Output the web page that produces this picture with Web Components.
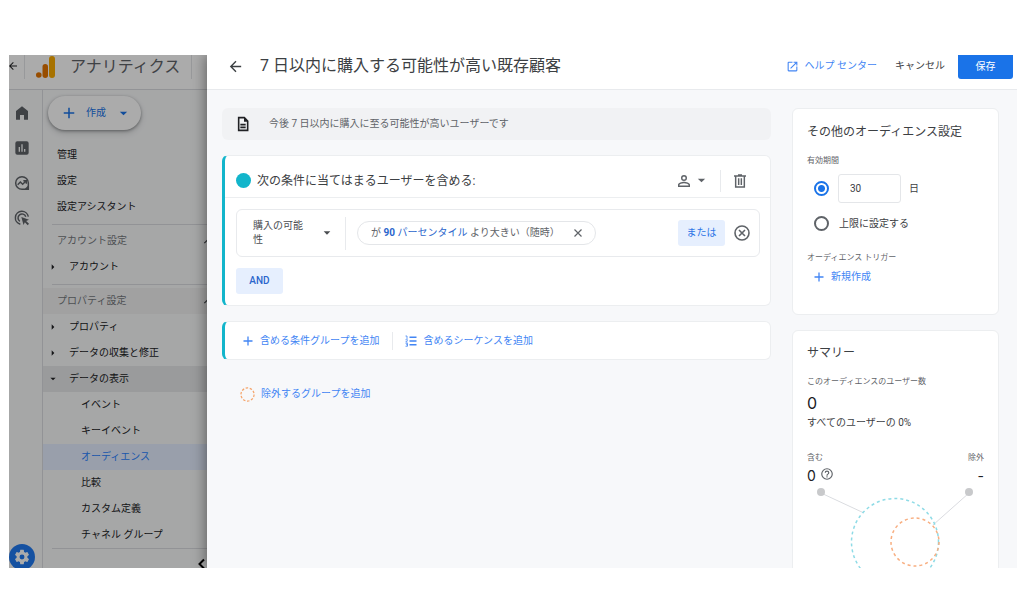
<!DOCTYPE html>
<html lang="ja">
<head>
<meta charset="utf-8">
<meta name="viewport" content="width=device-width, initial-scale=1">
<title>アナリティクス</title>
<style>
  body { margin: 0; background: #fff; font-family: Roboto, "Noto Sans CJK JP", sans-serif; font-size: 10px; line-height: 16px; color: #3c4043; }
</style>
</head>
<body>
<analytics-app></analytics-app>
<script>
const RESET = `
  *, *::before, *::after { box-sizing: border-box; }
  button, input { font: inherit; color: inherit; margin: 0; }
  button { border: 0; padding: 0; background: none; cursor: pointer; white-space: nowrap; }
  a { color: inherit; text-decoration: none; }
  h1, h2, p { margin: 0; font-weight: 400; }
`;

function define(name, markup, setup) {
  const template = document.createElement('template');
  template.innerHTML = markup;
  customElements.define(name, class extends HTMLElement {
    constructor() {
      super();
      this.attachShadow({ mode: 'open' }).append(template.content.cloneNode(true));
    }
    connectedCallback() { if (setup) setup(this, this.shadowRoot); }
  });
}

const ICONS = {
  back: '<path d="M20 11H7.8l5.6-5.6L12 4l-8 8 8 8 1.4-1.4L7.8 13H20z"/>',
  plus: '<path d="M10.700 3h2.600v7.700H21v2.600h-7.700V21h-2.600v-7.700H3v-2.600h7.700z"/>',
  caret: '<path d="M4 8h16l-8 8z"/>',
  home: '<path d="M12 2 3 9v13h6v-7h6v7h6V9z"/>',
  chart: '<path d="M19 2H5a3 3 0 0 0-3 3v14a3 3 0 0 0 3 3h14a3 3 0 0 0 3-3V5a3 3 0 0 0-3-3zM9 17.500H7v-7h2zm4 0h-2v-11h2zm4 0h-2v-4h2z"/>',
  explore: '<g fill="none" stroke="currentColor" stroke-width="2.200"><path d="M21.500 21.500V12a9.500 9.500 0 1 0-9.500 9.500z"/><path d="m5.500 14.500 4-4 3.500 3.500 5-5M14 8.500h4.500V13"/></g><path d="M22 15v7h-7z"/>',
  target: '<g fill="none" stroke="currentColor" stroke-width="2.200"><path d="M9.500 21.300A9.800 9.800 0 1 1 21.500 10"/><path d="M8.800 17A6 6 0 1 1 17.700 10"/></g><path d="m11 10.500 11.500 4-4.300 2 4.300 4.300-1.900 1.900-4.300-4.300-2 4.100z"/>',
  gear: '<path d="M19.140 12.940c.04-.3.06-.61.06-.94 0-.32-.02-.64-.07-.94l2.030-1.580a.49.49 0 0 0 .12-.61l-1.920-3.320a.488.488 0 0 0-.59-.22l-2.390.96c-.5-.38-1.030-.7-1.620-.94l-.36-2.540a.484.484 0 0 0-.48-.41h-3.840c-.24 0-.43.17-.47.41l-.36 2.540c-.59.24-1.130.57-1.620.94l-2.390-.96c-.22-.08-.47 0-.59.22L2.740 8.870c-.12.21-.08.47.12.61l2.030 1.580c-.05.3-.09.63-.09.94s.02.64.07.94l-2.030 1.580a.49.49 0 0 0-.12.61l1.920 3.320c.12.22.37.29.59.22l2.390-.96c.5.38 1.030.7 1.620.94l.36 2.540c.05.24.24.41.48.41h3.840c.24 0 .44-.17.47-.41l.36-2.540c.59-.24 1.130-.56 1.620-.94l2.390.96c.22.08.47 0 .59-.22l1.920-3.320c.12-.22.07-.47-.12-.61zM12 15.300a3.300 3.300 0 1 1 0-6.600 3.300 3.300 0 0 1 0 6.600z"/>',
  up: '<path d="m12 8-7 7 1.400 1.400 5.600-5.600 5.600 5.600L19 15z"/>',
  left: '<path d="M16 3 7 12l9 9" fill="none" stroke="currentColor" stroke-width="4"/>',
  external: '<path d="M19 19H5V5h7V3H5a2 2 0 0 0-2 2v14a2 2 0 0 0 2 2h14a2 2 0 0 0 2-2v-7h-2zM14 3v2h3.590l-9.830 9.830 1.410 1.410L19 6.410V10h2V3z"/>',
  document: '<g fill="none" stroke="currentColor" stroke-width="2.400"><path d="M14 2.500H5.500v19h13.500V7.500z"/><path d="M8 13h8M8 17h8"/></g><path d="M13.500 2v6.500H20z"/>',
  person: '<path d="M12 5.900a2.100 2.100 0 1 1 0 4.200 2.100 2.100 0 0 1 0-4.200m0 9c2.970 0 6.100 1.460 6.100 2.100v1.100H5.900V17c0-.64 3.130-2.100 6.100-2.100M12 4a4 4 0 1 0 0 8 4 4 0 0 0 0-8zm0 9c-2.670 0-8 1.340-8 4v3h16v-3c0-2.660-5.330-4-8-4z"/>',
  trash: '<g fill="none" stroke="currentColor" stroke-width="2.200"><path d="M5.500 5v16h13V5M3 4.500h18M9 3h6M10 8v10M14 8v10"/></g>',
  close: '<path d="m5 5 14 14M19 5 5 19" fill="none" stroke="currentColor" stroke-width="2.400"/>',
  remove: '<g fill="none" stroke="currentColor" stroke-width="2.400"><circle cx="12" cy="12" r="10.500"/><path d="m7.500 7.500 9 9M16.500 7.500l-9 9"/></g>',
  list: '<g fill="none" stroke="currentColor" stroke-width="2.800"><path d="M9 4.500h14M9 12h14M9 19.500h14"/></g><g fill="none" stroke="currentColor" stroke-width="1.600"><path d="M1 2h3v6M1 9.500h4v1l-3.500 3.500H5M1 16.500h4v6H1M2 19.500h3"/></g>',
  ring: '<circle cx="12" cy="12" r="10.500" fill="none" stroke="#f5a46b" stroke-width="2" stroke-dasharray="4 2.600"/>',
  help: '<path d="M11 18h2v-2h-2zm1-16a10 10 0 1 0 0 20 10 10 0 0 0 0-20zm0 18a8 8 0 1 1 0-16 8 8 0 0 1 0 16zm0-14a4 4 0 0 0-4 4h2a2 2 0 1 1 4 0c0 2-3 1.750-3 5h2c0-2.250 3-2.500 3-5a4 4 0 0 0-4-4z"/>'
};

define('ui-icon', `
  <style>
    :host { display: inline-flex; flex: none; width: var(--size, 14px); height: var(--size, 14px); }
    svg { width: 100%; height: 100%; fill: currentColor; }
  </style>
  <svg viewBox="0 0 24 24" aria-hidden="true"></svg>`,
  (host, root) => { root.querySelector('svg').innerHTML = ICONS[host.getAttribute('name')] || ''; });

define('product-bar', `
  <style>${RESET}
    :host { display: flex; align-items: flex-start; box-sizing: border-box; flex: none; height: 35px; background: #fff; border-bottom: 1px solid #dadce0; color: #202124; }
    .back { --size: 12px; width: 17px; height: 22px; display: flex; align-items: center; margin-left: -2px; }
    .brand { display: flex; align-items: center; gap: 14px; height: 24px; border: solid #e3e5e8; border-width: 0 1px; padding: 0 11px; color: #5f6368; font-size: 16px; line-height: 24px; white-space: nowrap; }
    svg { width: 20px; height: 22px; flex: none; }
  </style>
  <button class="back" aria-label="戻る"><ui-icon name="back"></ui-icon></button>
  <div class="brand">
    <svg viewBox="0 0 20 22" aria-hidden="true"><rect x="13" y="0" width="6" height="22" rx="3" fill="#f9ab00"/><rect x="6.500" y="8" width="5.500" height="14" rx="2.750" fill="#e37400"/><circle cx="2.800" cy="19" r="2.800" fill="#e37400"/></svg>
    <span>アナリティクス</span>
  </div>`);

define('icon-rail', `
  <style>${RESET}
    :host { display: flex; flex-direction: column; justify-content: space-between; box-sizing: border-box; flex: none; width: 34px; border-right: 1px solid #dadce0; color: #5f6368; }
    nav { display: flex; flex-direction: column; padding-top: 5px; }
    nav a { display: flex; align-items: center; justify-content: center; width: 26px; height: 35px; --size: 16px; }
    .admin { display: flex; align-items: center; justify-content: center; width: 26px; height: 26px; margin-bottom: -2px; border-radius: 50%; background: #2079f0; color: #fff; --size: 18px; }
  </style>
  <nav aria-label="メイン">
    <a href="#home" aria-label="ホーム"><ui-icon name="home"></ui-icon></a>
    <a href="#reports" aria-label="レポート"><ui-icon name="chart"></ui-icon></a>
    <a href="#explore" aria-label="探索"><ui-icon name="explore"></ui-icon></a>
    <a href="#ads" aria-label="広告"><ui-icon name="target"></ui-icon></a>
  </nav>
  <a class="admin" href="#admin" aria-label="管理"><ui-icon name="gear"></ui-icon></a>`);

define('nav-row', `
  <style>${RESET}
    :host { display: block; }
    a { display: flex; align-items: center; height: 26px; padding-left: 14px; color: #202124; white-space: nowrap; }
    :host([level="2"]) a { padding-left: 6px; }
    :host([level="3"]) a { padding-left: 38px; }
    ui-icon { display: none; --size: 8px; margin-right: 12px; }
    :host([level="2"]) ui-icon { display: inline-flex; }
    :host([level="2"]:not([open])) ui-icon { transform: rotate(-90deg); }
    :host([open]) { background: #e6e7e9; }
    :host([selected]) { background: #e4edff; }
    :host([selected]) a { color: #2b83ff; }
  </style>
  <a href="#section"><ui-icon name="caret"></ui-icon><slot></slot></a>`);

define('nav-heading', `
  <style>${RESET}
    :host { display: block; }
    :host([tinted]) { background: #f0f0f1; }
    button { display: flex; align-items: center; justify-content: space-between; width: 100%; height: 26px; padding: 0 6px 0 14px; color: #74787c; }
    ui-icon { --size: 14px; color: #3c4043; }
  </style>
  <button><slot></slot><ui-icon name="up"></ui-icon></button>`);

define('admin-nav', `
  <style>${RESET}
    :host { display: block; flex: 1; }
    .create { display: flex; align-items: center; height: 34px; margin: 6px 0 12px 5px; padding: 0 12px 0 14px; border-radius: 17px; background: #fff; color: #1a73e8; box-shadow: 0 1px 3px rgba(60,64,67,.5), 0 3px 6px rgba(60,64,67,.2); --size: 14px; }
    .create span { margin: 0 12px 0 10px; }
    .create ui-icon:last-child { --size: 11px; }
    hr { height: 1px; margin: 4px 0 3px 9px; border: 0; background: #dadce0; }
    nav + hr { margin-top: 0; }
    .collapse { display: block; margin: 9px 0 0 153px; color: #000; --size: 12px; }
  </style>
  <button class="create"><ui-icon name="plus"></ui-icon><span>作成</span><ui-icon name="caret"></ui-icon></button>
  <nav aria-label="管理">
    <nav-row>管理</nav-row>
    <nav-row>設定</nav-row>
    <nav-row>設定アシスタント</nav-row>
    <hr>
    <nav-heading>アカウント設定</nav-heading>
    <nav-row level="2">アカウント</nav-row>
    <hr>
    <nav-heading tinted>プロパティ設定</nav-heading>
    <nav-row level="2">プロパティ</nav-row>
    <nav-row level="2">データの収集と修正</nav-row>
    <nav-row level="2" open>データの表示</nav-row>
    <nav-row level="3">イベント</nav-row>
    <nav-row level="3">キーイベント</nav-row>
    <nav-row level="3" selected>オーディエンス</nav-row>
    <nav-row level="3">比較</nav-row>
    <nav-row level="3">カスタム定義</nav-row>
    <nav-row level="3">チャネル グループ</nav-row>
  </nav>
  <hr>
  <button class="collapse" aria-label="折りたたむ"><ui-icon name="left"></ui-icon></button>`);

define('admin-page', `
  <style>
    :host { display: flex; flex-direction: column; position: relative; overflow: hidden; background: #f8f9fa; }
    .wide { display: flex; flex: 1; min-height: 0; width: 212px; }
    .scrim { position: absolute; inset: 0; background: rgba(0,0,0,.33); pointer-events: none; }
  </style>
  <product-bar></product-bar>
  <div class="wide"><icon-rail></icon-rail><admin-nav></admin-nav></div>
  <div class="scrim"></div>`);

define('surface-card', `
  <style>
    :host { display: block; background: #fff; border: 1px solid #eceef0; border-radius: 6px; }
    :host([accent]) { border-left: 3px solid #12b5cb; }
  </style>
  <slot></slot>`);

define('drawer-header', `
  <style>${RESET}
    :host { display: flex; align-items: flex-start; box-sizing: border-box; flex: none; height: 35px; padding: 0 4px 0 20px; background: #fff; border-bottom: 1px solid #e8eaed; }
    .back { display: flex; align-items: center; height: 22px; --size: 17px; }
    h1 { flex: 1; margin-left: 16px; font-size: 16px; line-height: 22px; white-space: nowrap; }
    .help { display: flex; align-items: center; gap: 6px; height: 22px; color: #4285f4; white-space: nowrap; --size: 13px; }
    .cancel { height: 22px; margin: 0 13px 0 18px; }
    .save { width: 55px; height: 24px; border-radius: 0 0 3px 3px; background: #1a73e8; color: #fff; }
  </style>
  <button class="back" aria-label="戻る"><ui-icon name="back"></ui-icon></button>
  <h1>7 日以内に購入する可能性が高い既存顧客</h1>
  <a class="help" href="#help"><ui-icon name="external"></ui-icon>ヘルプ センター</a>
  <button class="cancel">キャンセル</button>
  <button class="save">保存</button>`);

define('audience-note', `
  <style>
    :host { display: flex; align-items: center; box-sizing: border-box; gap: 18px; height: 32px; padding: 0 13px; border-radius: 6px; background: #f1f2f4; color: #5f6368; white-space: nowrap; }
    ui-icon { --size: 16px; color: #202124; }
  </style>
  <ui-icon name="document"></ui-icon><span><slot></slot></span>`);

define('condition-row', `
  <style>${RESET}
    :host { display: flex; align-items: center; box-sizing: border-box; height: 48px; padding-right: 9px; border: 1px solid #e8eaed; border-radius: 6px; color: #5f6368; }
    .metric { display: flex; align-items: center; justify-content: space-between; width: 109px; height: 33px; padding: 0 13px 0 16px; border-right: 1px solid #e8eaed; line-height: 14px; --size: 10px; color: #4a4d51; }
    .metric span { width: 52px; text-align: left; white-space: normal; }
    .chip { display: flex; align-items: center; height: 24px; margin-left: 11px; padding: 0 11px 0 13px; border: 1px solid #e4e6e9; border-radius: 12px; white-space: nowrap; }
    .chip a { color: #2b66cc; }
    .chip b { font-weight: 700; }
    .chip button { display: flex; margin-left: 12px; --size: 12px; }
    .or { width: 47px; height: 26px; margin: 0 9px 0 auto; border-radius: 3px; background: #e6effe; color: #2b73e6; }
    .remove { display: flex; --size: 16px; }
  </style>
  <button class="metric" aria-haspopup="listbox"><span>購入の可能性</span><ui-icon name="caret"></ui-icon></button>
  <div class="chip"><span>が <a href="#edit"><b>90</b> パーセンタイル</a> より大きい（随時）</span><button aria-label="削除"><ui-icon name="close"></ui-icon></button></div>
  <button class="or">または</button>
  <button class="remove" aria-label="条件を削除"><ui-icon name="remove"></ui-icon></button>`);

define('include-group', `
  <style>${RESET}
    :host { display: block; }
    header { display: flex; align-items: center; height: 42px; padding: 8px 22px 0 11px; border-bottom: 1px solid #eceef0; color: #5f6368; }
    .dot { width: 15px; height: 15px; border-radius: 50%; background: #12b5cb; }
    h2 { flex: 1; margin-left: 6px; font-size: 12px; color: #3c4043; white-space: nowrap; }
    .scope { display: flex; align-items: center; gap: 3px; height: 22px; padding-right: 13px; border-right: 1px solid #e8eaed; --size: 18px; }
    .scope ui-icon:last-child { --size: 11px; }
    .delete { display: flex; margin-left: 11px; --size: 16px; }
    .body { padding: 11px 10px 11px 11px; }
    .and { width: 47px; height: 26px; margin-top: 11px; border-radius: 3px; background: #e6effe; color: #2b66cc; font-weight: 500; }
  </style>
  <surface-card accent>
    <header>
      <span class="dot"></span>
      <h2>次の条件に当てはまるユーザーを含める:</h2>
      <button class="scope" aria-label="範囲"><ui-icon name="person"></ui-icon><ui-icon name="caret"></ui-icon></button>
      <button class="delete" aria-label="グループを削除"><ui-icon name="trash"></ui-icon></button>
    </header>
    <div class="body">
      <condition-row></condition-row>
      <button class="and">AND</button>
    </div>
  </surface-card>`);

define('add-link', `
  <style>${RESET}
    :host { display: inline-flex; }
    button { display: flex; align-items: center; gap: 6px; height: 18px; color: #4285f4; }
  </style>
  <button><ui-icon></ui-icon><slot></slot></button>`,
  (host, root) => {
    const icon = document.createElement('ui-icon');
    icon.setAttribute('name', host.getAttribute('icon'));
    root.querySelector('ui-icon').replaceWith(icon);
  });

define('audience-builder', `
  <style>${RESET}
    :host { display: flex; flex-direction: column; gap: 15px; flex: 1; min-width: 0; }
    .add { display: flex; align-items: center; height: 37px; padding-left: 17px; --size: 12px; }
    .add add-link + add-link { margin-left: 13px; padding-left: 12px; border-left: 1px solid #e8eaed; }
    .exclude { margin: 10px 0 0 18px; --size: 15px; }
  </style>
  <audience-note>今後 7 日以内に購入に至る可能性が高いユーザーです</audience-note>
  <include-group></include-group>
  <surface-card accent>
    <div class="add">
      <add-link icon="plus">含める条件グループを追加</add-link>
      <add-link icon="list">含めるシーケンスを追加</add-link>
    </div>
  </surface-card>
  <add-link class="exclude" icon="ring">除外するグループを追加</add-link>`);

define('audience-settings', `
  <style>${RESET}
    :host { display: block; }
    section { height: 205px; padding: 14px; }
    h2 { font-size: 12px; line-height: 18px; }
    .label { margin-top: 11px; font-size: 8px; line-height: 18px; color: #5f6368; }
    .choice { display: flex; align-items: center; height: 29px; margin-top: 4px; padding-left: 7px; }
    .choice + .choice { margin-top: 6px; }
    input[type="radio"] { appearance: none; width: 15px; height: 15px; border: 2px solid #5f6368; border-radius: 50%; }
    input[type="radio"]:checked { border-color: #1a73e8; background: radial-gradient(circle, #1a73e8 3px, transparent 4px); }
    input[type="text"] { width: 63px; height: 29px; margin: 0 8px 0 9px; padding: 0 11px; border: 1px solid #e4e6e9; border-radius: 3px; background: #fff; }
    .cap { margin-left: 10px; }
    .trigger { margin-top: 11px; }
    add-link { margin: 1px 0 0 6px; --size: 12px; }
  </style>
  <surface-card>
    <section>
      <h2>その他のオーディエンス設定</h2>
      <p class="label">有効期間</p>
      <div class="choice"><input type="radio" name="duration" id="days" aria-label="日数を指定" checked><input type="text" id="count" value="30" aria-label="日数"><label for="count">日</label></div>
      <div class="choice"><input type="radio" name="duration" id="max"><label class="cap" for="max">上限に設定する</label></div>
      <p class="label trigger">オーディエンス トリガー</p>
      <add-link icon="plus">新規作成</add-link>
    </section>
  </surface-card>`);

define('audience-summary', `
  <style>${RESET}
    :host { display: block; }
    section { padding: 14px; }
    h2 { font-size: 12px; line-height: 16px; }
    .label { font-size: 8px; line-height: 18px; color: #5f6368; }
    .total { margin-top: 12px; }
    .big { font-family: Inter, Roboto, sans-serif; font-size: 16px; line-height: 24px; color: #202124; }
    .split { display: flex; justify-content: space-between; margin-top: 18px; }
    .split > div:last-child { text-align: right; }
    .value { display: flex; align-items: center; gap: 4px; font-family: Inter, Roboto, sans-serif; font-size: 14px; line-height: 18px; color: #202124; }
    .split > div:last-child .value { justify-content: flex-end; }
    .value ui-icon { --size: 14px; margin-bottom: 4px; color: #5f6368; }
    svg { display: block; width: 177px; height: 106px; margin-top: 1px; }
  </style>
  <surface-card>
    <section>
      <h2>サマリー</h2>
      <p class="label total">このオーディエンスのユーザー数</p>
      <p class="big">0</p>
      <p>すべてのユーザーの 0%</p>
      <div class="split">
        <div><p class="label">含む</p><p class="value">0<ui-icon name="help"></ui-icon></p></div>
        <div><p class="label">除外</p><p class="value">-</p></div>
      </div>
      <svg viewBox="0 0 177 106" fill="none" aria-hidden="true">
        <path d="M14 7 57 27M162 7 126 39" stroke="#dadce0"/>
        <circle cx="14" cy="6" r="4" fill="#c8c9cb"/><circle cx="162" cy="6" r="4" fill="#c8c9cb"/>
        <circle cx="88" cy="56" r="43.500" stroke="#8edbe6" stroke-width="1.500" stroke-dasharray="3 3"/>
        <circle cx="108" cy="56" r="24" stroke="#f8ae80" stroke-width="1.500" stroke-dasharray="3 3"/>
      </svg>
    </section>
  </surface-card>`);

define('audience-drawer', `
  <style>
    :host { display: flex; flex-direction: column; position: relative; min-width: 0; background: #f7f8fa; box-shadow: -2px 0 12px rgba(0,0,0,.4); }
    main { display: flex; gap: 21px; padding: 18px 18px 0 15px; }
    aside { display: flex; flex-direction: column; gap: 15px; flex: none; width: 207px; }
  </style>
  <drawer-header></drawer-header>
  <main>
    <audience-builder></audience-builder>
    <aside><audience-settings></audience-settings><audience-summary></audience-summary></aside>
  </main>`);

define('analytics-app', `
  <style>
    :host { display: grid; grid-template: minmax(0, 1fr) / 198px minmax(0, 1fr); height: calc(100vh - 101px); margin: 55px 7px 46px 9px; overflow: hidden; }
  </style>
  <admin-page></admin-page>
  <audience-drawer></audience-drawer>`);
</script>
</body>
</html>
